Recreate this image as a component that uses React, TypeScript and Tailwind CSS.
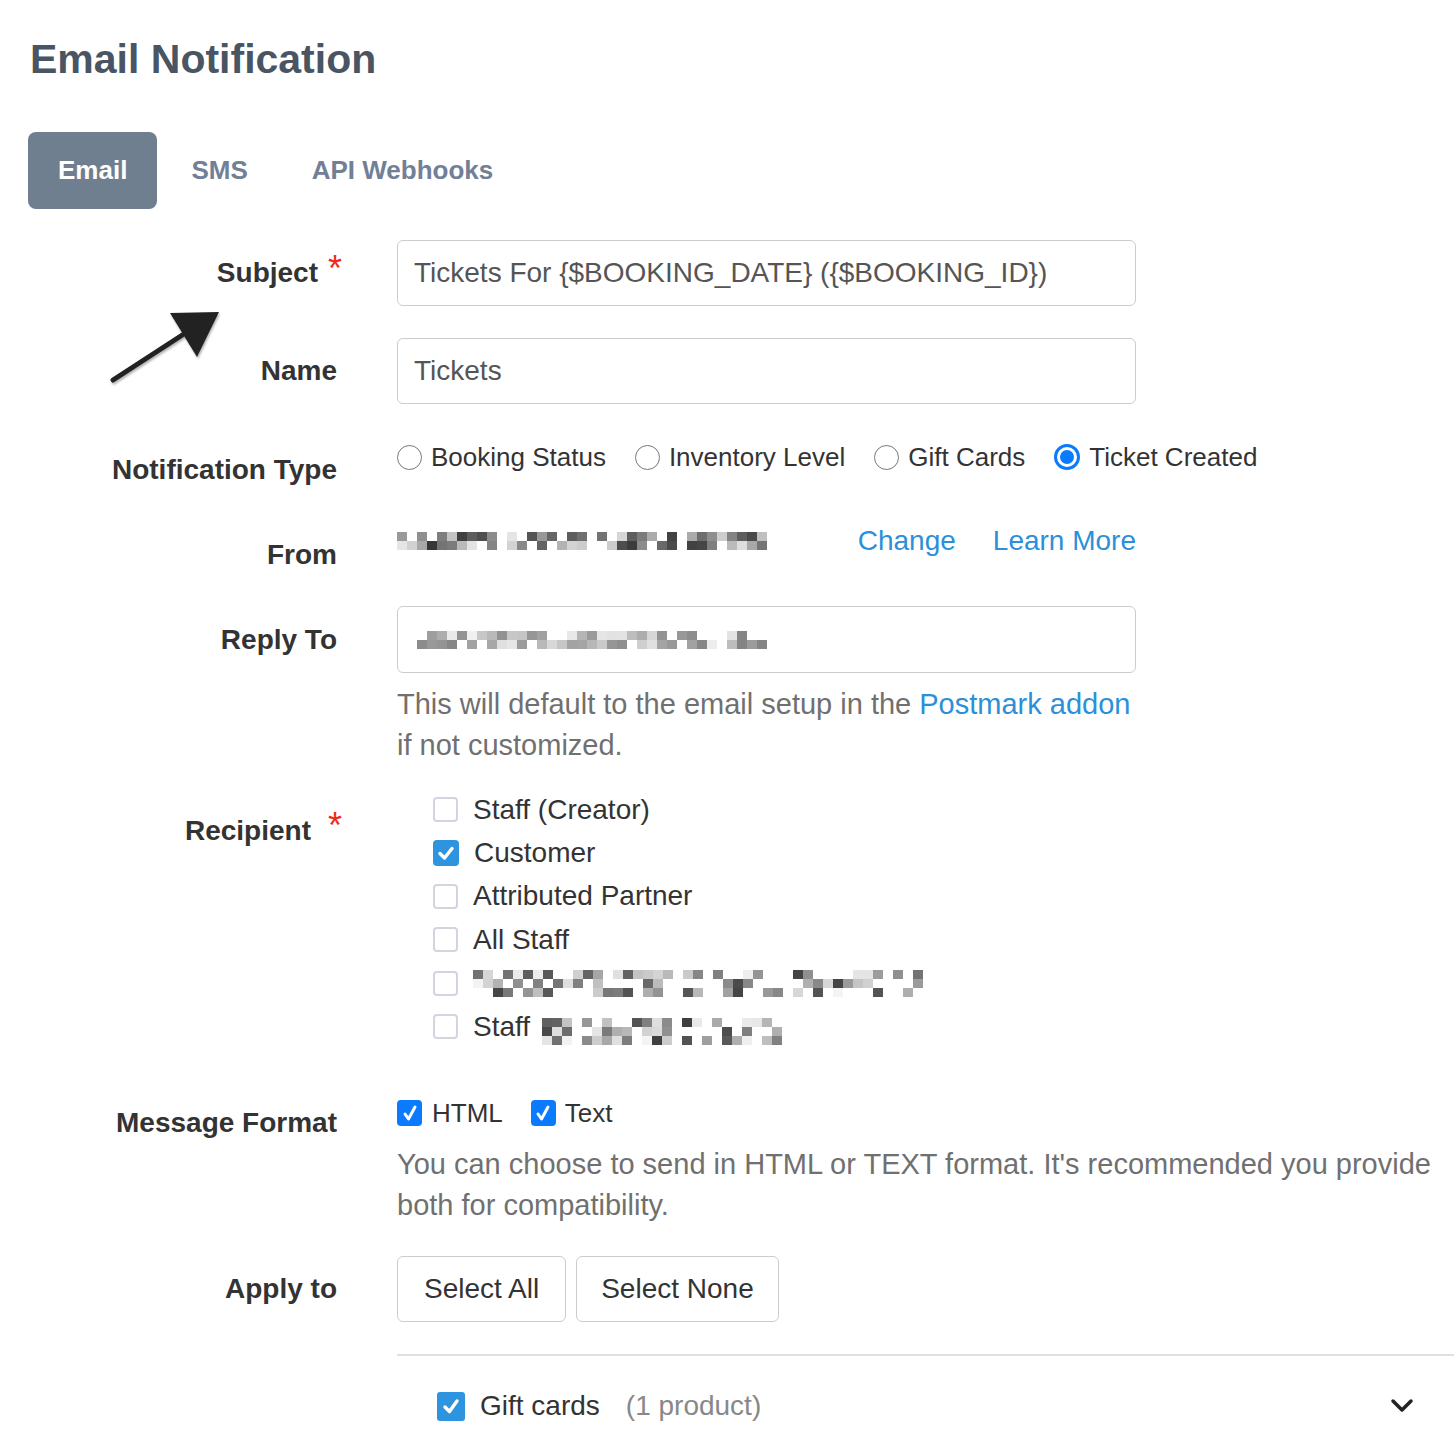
import React from 'react';

const label = 'relative w-[309px] shrink-0 text-right text-[28px] font-bold text-[#333]';

function rand(seed: number) {
  let s = seed;
  return () => {
    s = (s * 9301 + 49297) % 233280;
    return s / 233280;
  };
}

// blurred / pixelated private text
function Pixels({ cols, rows, seed, min, max, blank }: { cols: number; rows: number; seed: number; min: number; max: number; blank: number }) {
  const r = rand(seed);
  return (
    <div className="flex flex-col">
      {Array.from({ length: rows }).map((_, i) => (
        <div key={i} className="flex">
          {Array.from({ length: cols }).map((_, j) => {
            const empty = r() < blank;
            const v = Math.round(min + r() * (max - min));
            return (
              <div
                key={j}
                className="h-[9px] w-[10px]"
                style={{ backgroundColor: empty ? 'transparent' : `rgb(${v},${v},${v})` }}
              />
            );
          })}
        </div>
      ))}
    </div>
  );
}

function Radio({ checked, text }: { checked?: boolean; text: string }) {
  return (
    <label className="mr-[29px] flex items-center text-[26px] text-[#333]">
      {checked ? (
        <span className="flex h-[26px] w-[26px] items-center justify-center rounded-full border-[3px] border-[#0a7aff] bg-white">
          <span className="h-[14px] w-[14px] rounded-full bg-[#0a7aff]" />
        </span>
      ) : (
        <span className="h-[25px] w-[25px] rounded-full border-[1.5px] border-[#777] bg-white" />
      )}
      <span className="ml-[9px]">{text}</span>
    </label>
  );
}

function Check({ checked }: { checked?: boolean }) {
  if (checked)
    return (
      <span className="flex h-[26px] w-[26px] items-center justify-center rounded-[4px] bg-[#2f94e0]">
        <svg width="18" height="18" viewBox="0 0 18 18">
          <polyline points="3,9.5 7.5,14 15,4.5" fill="none" stroke="white" strokeWidth="3.4" strokeLinecap="round" strokeLinejoin="round" />
        </svg>
      </span>
    );
  return <span className="h-[25px] w-[25px] rounded-[4px] border-2 border-[#d4d4e0] bg-white" />;
}

function MacCheck() {
  return (
    <span className="flex h-[26px] w-[25px] items-center justify-center rounded-[4px] bg-[#0a7aff]">
      <svg width="16" height="18" viewBox="0 0 16 18">
        <path d="M3 10 L6.5 15 L13 3" fill="none" stroke="white" strokeWidth="3" strokeLinecap="round" strokeLinejoin="round" />
      </svg>
    </span>
  );
}

const recipients = ['Staff (Creator)', 'Customer', 'Attributed Partner', 'All Staff'];

export default function App() {
  return (
    <div className="relative min-h-screen w-full overflow-hidden bg-white pl-[28px] pt-[35px] font-['Liberation_Sans',Arial,sans-serif] text-[#333]">
      <h1 className="ml-[2px] text-[41px] font-bold leading-[48px] text-[#4a5563]">Email Notification</h1>

      <div className="mt-[49px] flex gap-[2px]">
        <button className="h-[77px] rounded-[8px] bg-[#6f7f90] px-[30px] text-[26px] font-bold text-white">Email</button>
        <button className="h-[77px] px-[32px] text-[26px] font-bold text-[#718096]">SMS</button>
        <button className="h-[77px] pl-[30px] pr-[32px] text-[26px] font-bold text-[#718096]">API Webhooks</button>
      </div>

      {/* Subject */}
      <div className="mt-[31px] flex">
        <div className={`${label} pr-[19px] leading-[66px]`}>
          Subject
          <span className="absolute right-[-5px] top-[11px] text-[36px] font-normal leading-none text-[#f02a1a]">*</span>
        </div>
        <div className="ml-[60px] flex h-[66px] w-[739px] items-center rounded-[6px] border border-[#ccc] px-[16px] text-[28px] text-[#555]">
          {'Tickets For {$BOOKING_DATE} ({$BOOKING_ID})'}
        </div>
      </div>

      {/* Name */}
      <div className="mt-[32px] flex">
        <div className={`${label} leading-[66px]`}>Name</div>
        <div className="ml-[60px] flex h-[66px] w-[739px] items-center rounded-[6px] border border-[#ccc] px-[16px] text-[28px] text-[#555]">
          Tickets
        </div>
      </div>

      {/* Notification type */}
      <div className="mt-[36px] flex">
        <div className={`${label} pt-[13px] leading-[34px]`}>Notification Type</div>
        <div className="ml-[60px] flex h-[34px] items-center">
          <Radio text="Booking Status" />
          <Radio text="Inventory Level" />
          <Radio text="Gift Cards" />
          <Radio text="Ticket Created" checked />
        </div>
      </div>

      {/* From */}
      <div className="mt-[37px] flex">
        <div className={`${label} pt-[14px] leading-[34px]`}>From</div>
        <div className="ml-[60px] flex h-[34px] w-[739px] items-center justify-between">
          <Pixels cols={37} rows={2} seed={7} min={50} max={235} blank={0.2} />
          <div className="flex gap-[37px] text-[28px] text-[#2b90d9]">
            <span>Change</span>
            <span>Learn More</span>
          </div>
        </div>
      </div>

      {/* Reply to */}
      <div className="mt-[34px] flex">
        <div className={`${label} leading-[67px]`}>Reply To</div>
        <div className="ml-[60px] w-[739px]">
          <div className="flex h-[67px] items-center rounded-[6px] border border-[#ccc] px-[19px]">
            <Pixels cols={35} rows={2} seed={21} min={130} max={240} blank={0.25} />
          </div>
          <p className="mt-[11px] text-[29px] leading-[41px] text-[#707070]">
            <span className="whitespace-nowrap">
              This will default to the email setup in the <span className="text-[#2b90d9]">Postmark addon</span>
            </span>
            <br />
            if not customized.
          </p>
        </div>
      </div>

      {/* Recipient */}
      <div className="mt-[22px] flex">
        <div className={`${label} pr-[26px] pt-[26px] leading-[34px]`}>
          Recipient
          <span className="absolute right-[-5px] top-[20px] text-[36px] font-normal leading-none text-[#f02a1a]">*</span>
        </div>
        <div className="ml-[60px] pl-[36px] text-[28px] text-[#333]">
          {recipients.map((r, i) => (
            <div key={r} className="flex h-[43.4px] items-center">
              <Check checked={i === 1} />
              <span className="ml-[15px]">{r}</span>
            </div>
          ))}
          <div className="flex h-[43.4px] items-center">
            <Check />
            <span className="ml-[15px]">
              <Pixels cols={45} rows={3} seed={33} min={60} max={245} blank={0.45} />
            </span>
          </div>
          <div className="flex h-[43.4px] items-center">
            <Check />
            <span className="ml-[15px]">Staff</span>
            <span className="ml-[12px] mt-[10px]">
              <Pixels cols={24} rows={3} seed={58} min={60} max={245} blank={0.4} />
            </span>
          </div>
        </div>
      </div>

      {/* Message format */}
      <div className="mt-[48px] flex">
        <div className={`${label} pt-[10px] leading-[34px]`}>Message Format</div>
        <div className="ml-[60px] flex-1">
          <div className="flex h-[34px] items-center text-[26px] text-[#333]">
            <MacCheck />
            <span className="ml-[10px]">HTML</span>
            <span className="ml-[28px]">
              <MacCheck />
            </span>
            <span className="ml-[9px]">Text</span>
          </div>
          <p className="mt-[14px] text-[29px] leading-[41px] text-[#707070]">
            <span className="whitespace-nowrap">You can choose to send in HTML or TEXT format. It's recommended you provide</span>
            <br />
            both for compatibility.
          </p>
        </div>
      </div>

      {/* Apply to */}
      <div className="mt-[30px] flex">
        <div className={`${label} leading-[66px]`}>Apply to</div>
        <div className="ml-[60px] flex-1">
          <div className="flex gap-[10px]">
            <button className="h-[66px] rounded-[6px] border border-[#ccc] px-[26px] text-[28px] text-[#333]">Select All</button>
            <button className="h-[66px] rounded-[6px] border border-[#ccc] px-[24px] text-[28px] text-[#333]">Select None</button>
          </div>
          <div className="mt-[32px] h-[2px] bg-[#e0e0e0]" />
          <div className="mt-[33px] flex h-[34px] items-center pl-[40px] pr-[40px] text-[28px]">
            <span className="flex h-[29px] w-[28px] items-center justify-center rounded-[3px] bg-[#2f94e0]">
              <svg width="18" height="20" viewBox="0 0 18 20">
                <polyline points="3,11 7.5,15.5 15,5" fill="none" stroke="white" strokeWidth="3.4" strokeLinecap="round" strokeLinejoin="round" />
              </svg>
            </span>
            <span className="ml-[15px] text-[#333]">Gift cards</span>
            <span className="ml-[26px] text-[#888]">(1 product)</span>
            <span className="flex-1" />
            <svg width="24" height="16" viewBox="0 0 24 16">
              <polyline points="3,3 12,12 21,3" fill="none" stroke="#222" strokeWidth="3.5" strokeLinecap="round" strokeLinejoin="round" />
            </svg>
          </div>
        </div>
      </div>

      {/* annotation arrow */}
      <svg className="pointer-events-none absolute left-0 top-0 drop-shadow-[1px_2px_1px_rgba(0,0,0,0.3)]" width="240" height="400" viewBox="0 0 240 400">
        <line x1="113" y1="380" x2="190" y2="330" stroke="#222" strokeWidth="5" strokeLinecap="round" />
        <polygon points="170,313 219,312 197,357" fill="#222" />
      </svg>
    </div>
  );
}
